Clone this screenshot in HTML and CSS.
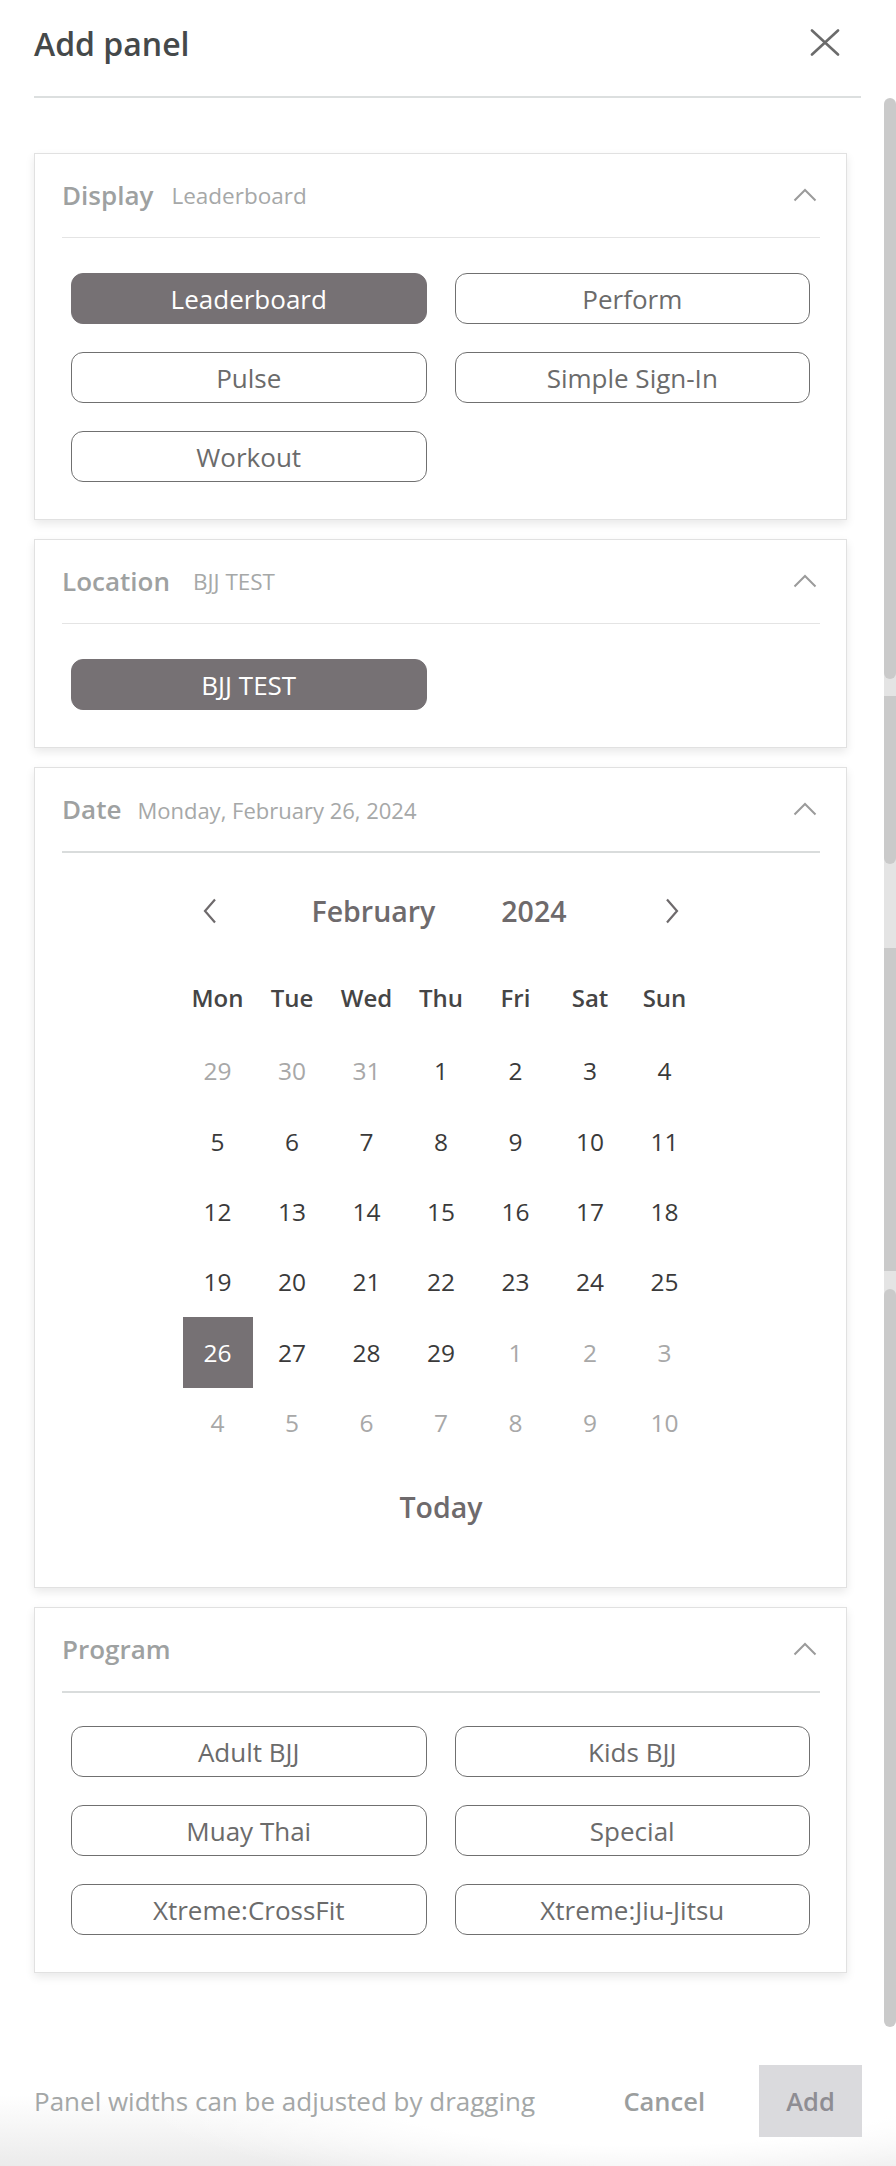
FILE: index.html
```html
<!DOCTYPE html>
<html lang="en">
<head>
<meta charset="utf-8">
<title>Add panel</title>
<link rel="stylesheet" href="styles.css">
</head>
<body>
<div class="modal">
  <header class="modal-header">
    <h1 class="modal-title">Add panel</h1>
    <button class="close-btn" aria-label="Close">
      <svg width="30" height="27" viewBox="0 0 30 27"><path d="M2 1.5 L28 25.5 M28 1.5 L2 25.5" stroke="#6b6b6b" stroke-width="2.6" fill="none" stroke-linecap="round"/></svg>
    </button>
  </header>

  <div class="scroll-area">
    <div class="panels">
      <section class="card">
        <div class="card-header">
          <span class="card-title">Display</span>
          <span class="card-sub">Leaderboard</span>
          <svg class="chev" width="24" height="14" viewBox="0 0 24 14"><polyline points="1.5,12.5 12,2 22.5,12.5" fill="none" stroke="#9b9b9b" stroke-width="2"/></svg>
        </div>
        <div class="chip-grid">
          <div class="chip chip-on">Leaderboard</div>
          <div class="chip">Perform</div>
          <div class="chip">Pulse</div>
          <div class="chip">Simple Sign-In</div>
          <div class="chip">Workout</div>
        </div>
      </section>

      <section class="card">
        <div class="card-header">
          <span class="card-title">Location</span>
          <span class="card-sub sub-wide">BJJ TEST</span>
          <svg class="chev" width="24" height="14" viewBox="0 0 24 14"><polyline points="1.5,12.5 12,2 22.5,12.5" fill="none" stroke="#9b9b9b" stroke-width="2"/></svg>
        </div>
        <div class="chip-grid">
          <div class="chip chip-on">BJJ TEST</div>
        </div>
      </section>

      <section class="card">
        <div class="card-header card-header-strong">
          <span class="card-title">Date</span>
          <span class="card-sub sub-date">Monday, February 26, 2024</span>
          <svg class="chev" width="24" height="14" viewBox="0 0 24 14"><polyline points="1.5,12.5 12,2 22.5,12.5" fill="none" stroke="#9b9b9b" stroke-width="2"/></svg>
        </div>
        <div class="calendar">
          <div class="cal-nav">
            <button class="cal-arrow" aria-label="Previous month">
              <svg width="16" height="26" viewBox="0 0 16 26"><polyline points="13,1.5 3,13 13,24.5" fill="none" stroke="#6e6a6c" stroke-width="2.2"/></svg>
            </button>
            <div class="cal-title"><span>February</span><span>2024</span></div>
            <button class="cal-arrow" aria-label="Next month">
              <svg width="16" height="26" viewBox="0 0 16 26"><polyline points="3,1.5 13,13 3,24.5" fill="none" stroke="#6e6a6c" stroke-width="2.2"/></svg>
            </button>
          </div>
          <div class="cal-week">
            <span>Mon</span><span>Tue</span><span>Wed</span><span>Thu</span><span>Fri</span><span>Sat</span><span>Sun</span>
          </div>
          <div class="cal-days">
            <span class="muted">29</span><span class="muted">30</span><span class="muted">31</span><span>1</span><span>2</span><span>3</span><span>4</span>
            <span>5</span><span>6</span><span>7</span><span>8</span><span>9</span><span>10</span><span>11</span>
            <span>12</span><span>13</span><span>14</span><span>15</span><span>16</span><span>17</span><span>18</span>
            <span>19</span><span>20</span><span>21</span><span>22</span><span>23</span><span>24</span><span>25</span>
            <span><b class="sel">26</b></span><span>27</span><span>28</span><span>29</span><span class="muted">1</span><span class="muted">2</span><span class="muted">3</span>
            <span class="muted">4</span><span class="muted">5</span><span class="muted">6</span><span class="muted">7</span><span class="muted">8</span><span class="muted">9</span><span class="muted">10</span>
          </div>
          <div class="cal-today">Today</div>
        </div>
      </section>

      <section class="card">
        <div class="card-header card-header-strong">
          <span class="card-title">Program</span>
          <svg class="chev" width="24" height="14" viewBox="0 0 24 14"><polyline points="1.5,12.5 12,2 22.5,12.5" fill="none" stroke="#9b9b9b" stroke-width="2"/></svg>
        </div>
        <div class="chip-grid chip-grid-tight">
          <div class="chip">Adult BJJ</div>
          <div class="chip">Kids BJJ</div>
          <div class="chip">Muay Thai</div>
          <div class="chip">Special</div>
          <div class="chip">Xtreme:CrossFit</div>
          <div class="chip">Xtreme:Jiu-Jitsu</div>
        </div>
      </section>
    </div>

    <div class="scrollbar" aria-hidden="true">
      <div class="sb sb-1"></div>
      <div class="sb-gap sb-2"></div>
      <div class="sb sb-3"></div>
      <div class="sb-gap sb-4"></div>
      <div class="sb sb-5"></div>
      <div class="sb-gap sb-6"></div>
      <div class="sb sb-7"></div>
    </div>
  </div>

  <footer class="modal-footer">
    <span class="hint">Panel widths can be adjusted by dragging</span>
    <button class="btn-cancel">Cancel</button>
    <button class="btn-add">Add</button>
  </footer>
</div>
</body>
</html>
```

FILE: styles.css
```css
* { box-sizing: border-box; }

html, body {
  margin: 0;
  padding: 0;
}

body {
  width: 896px;
  height: 2166px;
  overflow: hidden;
  font-family: "Open Sans", "Liberation Sans", sans-serif;
  background:
    radial-gradient(ellipse 520px 110px at 640px 2085px, #ffffff 55%, rgba(255,255,255,0) 100%),
    linear-gradient(to bottom, #ffffff 0, #ffffff 2095px, #ebebeb 2166px);
}

button {
  font-family: inherit;
  border: none;
  background: none;
  padding: 0;
  cursor: pointer;
}

.modal {
  display: flex;
  flex-direction: column;
  height: 2166px;
}

/* Header */
.modal-header {
  margin: 0 35px 0 34px;
  height: 98px;
  border-bottom: 2px solid #dcdfdf;
  display: flex;
  align-items: center;
  justify-content: space-between;
  padding-bottom: 8px;
}

.modal-title {
  margin: 0;
  font-size: 32px;
  font-weight: 600;
  color: #45494a;
  line-height: 1.3;
}

.close-btn {
  width: 30px;
  height: 27px;
  margin-right: 21px;
  margin-bottom: 4px;
  display: flex;
}

/* Scroll area */
.scroll-area {
  display: flex;
  height: 1929px;
}

.panels {
  width: 813px;
  margin-left: 34px;
  padding-top: 55px;
  display: flex;
  flex-direction: column;
  gap: 19px;
}

.card {
  background: #fff;
  border: 1px solid #e1e1e1;
  box-shadow: 0 4px 9px rgba(0, 0, 0, 0.09);
  padding: 0 26px 0 27px;
}

.card-header {
  height: 84px;
  border-bottom: 1px solid #e4e4e4;
  display: flex;
  align-items: center;
}

.card-header-strong {
  height: 85px;
  border-bottom: 2px solid #d9dcdc;
}

.card-title {
  font-size: 26px;
  font-weight: 600;
  color: #9ea1a1;
  margin-right: 18px;
  margin-top: -2px;
}

.card-sub {
  font-size: 22.5px;
  color: #a6a8a8;
}

.sub-wide {
  margin-left: 5px;
}

.sub-date {
  font-size: 22px;
  margin-left: -2px;
}

.chev {
  margin-left: auto;
  margin-right: 3px;
  margin-top: -2px;
}

/* Chips */
.chip-grid {
  display: grid;
  grid-template-columns: 1fr 1fr;
  grid-auto-rows: 51px;
  gap: 28px;
  padding: 35px 10px 37px 9px;
}

.chip-grid-tight {
  padding-top: 33px;
}

.chip {
  border: 1px solid #707070;
  border-radius: 12px;
  display: flex;
  align-items: center;
  justify-content: center;
  font-size: 26px;
  color: #6b6b6b;
  background: #fff;
}

.chip-on {
  background: #767174;
  border-color: #767174;
  color: #fff;
}

/* Calendar */
.calendar {
  padding: 23px 0 45px;
}

.cal-nav {
  width: 521.5px;
  height: 70px;
  margin: 0 auto 15px;
  display: flex;
  align-items: center;
  justify-content: space-between;
}

.cal-arrow {
  width: 60px;
  height: 40px;
  display: flex;
  align-items: center;
  justify-content: center;
}

.cal-title {
  display: flex;
  gap: 66px;
  font-size: 28.5px;
  font-weight: 600;
  color: #6e6a6c;
  margin-right: 4px;
}

.cal-week,
.cal-days {
  width: 521.5px;
  margin: 0 auto;
  display: grid;
  grid-template-columns: repeat(7, 1fr);
}

.cal-week {
  grid-auto-rows: 72px;
  margin-bottom: 2.5px;
  font-size: 24px;
  font-weight: 600;
  color: #454545;
}

.cal-days {
  grid-auto-rows: 70.4px;
  font-size: 24.5px;
  color: #3a3a3a;
}

.cal-week span,
.cal-days span {
  display: flex;
  align-items: center;
  justify-content: center;
}

.cal-days .muted {
  color: #a8a8a8;
}

.sel {
  width: 70px;
  height: 71px;
  display: flex;
  align-items: center;
  justify-content: center;
  background: #767174;
  color: #fff;
  font-weight: 400;
}

.cal-today {
  margin-top: 14.5px;
  height: 70px;
  display: flex;
  align-items: center;
  justify-content: center;
  font-size: 28.5px;
  font-weight: 600;
  color: #6e6a6c;
}

/* Scrollbar */
.scrollbar {
  margin-left: auto;
  width: 12px;
  display: flex;
  flex-direction: column;
  background: linear-gradient(to bottom, #fff 0, #fff 8px, #e4e4e4 8px, #e4e4e4 calc(100% - 8px), #fff calc(100% - 8px));
}

.sb {
  background: #cacaca;
}

.sb-gap {
  background: #e4e4e4;
}

.sb-1 { height: 581px; border-radius: 6px; }
.sb-2 { height: 17px; }
.sb-3 { height: 168px; border-radius: 0 0 6px 6px; }
.sb-4 { height: 84px; }
.sb-5 { height: 324px; }
.sb-6 { height: 18px; }
.sb-7 { height: 738px; border-radius: 6px; }

/* Footer */
.modal-footer {
  margin-top: 38px;
  height: 72px;
  padding: 0 34px;
  display: flex;
  align-items: center;
}

.hint {
  font-size: 26px;
  color: #a4a7a7;
}

.btn-cancel {
  margin-left: auto;
  margin-right: 54px;
  font-size: 25.5px;
  font-weight: 600;
  color: #9b9e9e;
}

.btn-add {
  width: 103px;
  height: 72px;
  background: #dadadd;
  font-size: 25.5px;
  font-weight: 600;
  color: #8e8d93;
}
```
